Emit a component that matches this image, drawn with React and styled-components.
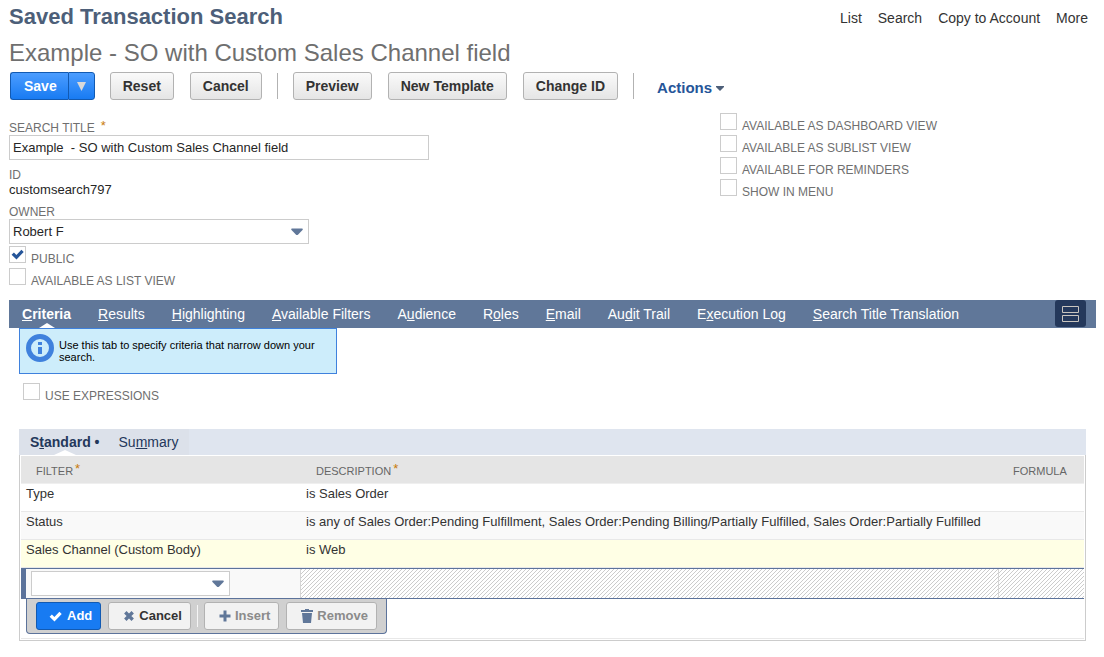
import React, { useState } from "react";
import styled, { createGlobalStyle, css } from "styled-components";

const GlobalStyle = createGlobalStyle`
  *, *::before, *::after { box-sizing: border-box; }
  body {
    margin: 0;
    background: #fff;
    color: #262626;
    font: 13px/16px "Liberation Sans", Arial, sans-serif;
  }
  button, input, select { font: inherit; }
`;

const Page = styled.main`
  padding: 4px 8px 16px 9px;
`;

const Header = styled.header`
  display: flex;
  justify-content: space-between;
  align-items: flex-start;
`;

const Title = styled.h1`
  margin: 0;
  font-size: 22px;
  line-height: 26px;
  color: #4d5f79;
`;

const Subtitle = styled.h2`
  margin: 9px 0 6px;
  font-size: 24px;
  line-height: 27px;
  font-weight: normal;
  color: #6f6f6f;
`;

const PageLinks = styled.nav`
  display: flex;
  gap: 16px;
  padding: 6px 8px 0 0;
`;

const PageLink = styled.a`
  font-size: 14px;
  color: #333;
  text-decoration: none;
`;

const Toolbar = styled.div`
  display: flex;
  align-items: center;
  padding-left: 1px;
  gap: 15px;

  > button + button { margin-left: 1px; }
`;

const primary = css`
  color: #fff;
  border-color: #125ab2;
  background: linear-gradient(#4c9dff, #187bf2);
`;

const Button = styled.button`
  height: 28px;
  padding: 0 12px;
  border: 1px solid #b2b2b2;
  border-radius: 3px;
  background: linear-gradient(#fafafa, #e5e5e5);
  color: #333;
  font-size: 14px;
  font-weight: bold;
  white-space: nowrap;
  ${(p) => p.$primary && primary}
`;

const SplitButton = styled.div`
  display: flex;
`;

const SaveButton = styled(Button)`
  padding: 0 11px 0 13px;
  border-radius: 3px 0 0 3px;
  border-right-width: 0;
`;

const SaveMenuButton = styled(Button)`
  display: flex;
  align-items: center;
  justify-content: center;
  width: 27px;
  padding: 0;
  border-radius: 0 3px 3px 0;
`;

const Divider = styled.span`
  width: 1px;
  height: 26px;
  background: #b2b2b2;
`;

const ActionsButton = styled.button`
  display: flex;
  align-items: center;
  gap: 4px;
  margin: 4px 0 0 8px;
  padding: 0;
  border: 0;
  background: none;
  color: #255599;
  font-size: 15px;
  font-weight: bold;
`;

const FormArea = styled.form`
  display: grid;
  grid-template-columns: 711px 1fr;
  padding-top: 13px;
`;

const FormColumn = styled.div`
  display: flex;
  flex-direction: column;
`;

const Field = styled.div`
  display: flex;
  flex-direction: column;
  align-items: flex-start;
  margin-bottom: ${(p) => (p.$tight ? 2 : 8)}px;
`;

const FieldLabel = styled.label`
  padding-top: ${(p) => (p.$first ? 8 : 0)}px;
  font-size: 12px;
  line-height: 14px;
  color: #6f6f6f;
`;

const FieldValue = styled.span`
  line-height: 15px;
`;

const Required = styled.span`
  color: #c87b0a;
  font-size: 13px;
  line-height: 10px;
  margin-left: ${(p) => (p.$wide ? 6 : 2)}px;
  vertical-align: 2px;
`;

const TextInput = styled.input`
  width: 420px;
  height: 25px;
  padding: 0 3px;
  border: 1px solid #ccc;
  color: #262626;
`;

const SelectBox = styled.div`
  display: grid;
  align-items: center;
  width: ${(p) => p.$width}px;
  background: #fff;

  > * { grid-area: 1 / 1; }
  > svg {
    justify-self: end;
    margin-right: 6px;
    pointer-events: none;
  }
`;

const Select = styled.select`
  appearance: none;
  width: 100%;
  height: 25px;
  padding: 0 24px 0 3px;
  border: 1px solid #ccc;
  border-radius: 0;
  background: transparent;
  color: #262626;
`;

const CheckLabel = styled.label`
  display: flex;
  align-items: flex-start;
  gap: 5px;
  height: 22px;
  font-size: 12px;
  line-height: 15px;
  color: #6f6f6f;

  > span:last-child { padding-top: 6px; }
`;

const CheckFrame = styled.span`
  display: grid;
  flex: none;
  width: 17px;
  height: 17px;
  border: 1px solid #ccc;
  background: #fff;

  > * { grid-area: 1 / 1; }
  > svg { display: none; pointer-events: none; }
  > input:checked + svg { display: block; }
`;

const CheckInput = styled.input`
  appearance: none;
  width: 15px;
  height: 15px;
  margin: 0;
`;

const TabBar = styled.nav`
  display: flex;
  justify-content: space-between;
  height: 28px;
  padding: 0 10px 0 0;
  margin-top: 10px;
  background: #607799;
`;

const Tabs = styled.div`
  display: flex;
`;

const Tab = styled.button`
  display: flex;
  flex-direction: column;
  align-items: center;
  justify-content: space-between;
  padding: 6px 14px 0 13px;
  border: 0;
  background: none;
  color: #fff;
  font-size: 14px;
  font-weight: ${(p) => (p.$active ? "bold" : "normal")};
  white-space: nowrap;
`;

const LayoutButton = styled.button`
  display: grid;
  place-items: center;
  width: 31px;
  height: 27px;
  padding: 0;
  border: 0;
  border-radius: 3px;
  background: #24385b;
`;

const Panel = styled.section`
  padding: 0 10px;
`;

const Hint = styled.div`
  display: flex;
  gap: 5px;
  width: 318px;
  height: 46px;
  padding: 5px 6px;
  border: 1px solid #3f81dd;
  background: #cdedfb;
  color: #000;
  font-size: 11px;
  line-height: 12px;

  > svg { flex: none; }
  > p { margin: 5px 0 0; }
`;

const ExpressionRow = styled.div`
  padding: 9px 0 24px 4px;
`;

const SubTabBar = styled.div`
  display: flex;
  height: 26px;
  background: #dfe5ef;
`;

const SubTabs = styled.div`
  display: flex;
  background: #dce1ea;
`;

const SubTab = styled(Tab)`
  padding: 5px ${(p) => (p.$active ? 10 : 11)}px 0 ${(p) => (p.$active ? 11 : 9)}px;
  color: #24385b;
`;

const Machine = styled.div`
  padding: 1px;
  border: 1px solid #ccc;
  border-top: 0;
`;

const Table = styled.table`
  width: 100%;
  border-collapse: separate;
  border-spacing: 0;
  table-layout: fixed;
  color: #333;
`;

const HeadCell = styled.th`
  width: ${(p) => p.$width};
  height: 28px;
  padding: 2px 15px 0;
  border-bottom: 1px solid #efefef;
  background: #e5e5e5;
  color: #666;
  font-size: 11px;
  font-weight: normal;
  text-align: left;
  white-space: nowrap;
`;

const Row = styled.tr`
  background: ${(p) => p.$fill};
`;

const Cell = styled.td`
  height: 28px;
  padding: 2px 5px 0;
  border-bottom: 1px solid #e8e8e8;
  vertical-align: top;
  white-space: nowrap;
`;

const EditCell = styled.td`
  height: 31px;
  padding: 0 5px;
  border: solid #5c739b;
  border-width: 1px 0 1px 5px;
  box-shadow: inset -1px 0 #d5d5d5;
  background: #f9f9f9;
`;

const HatchCell = styled.td`
  padding: 0;
  border: solid #5c739b;
  border-width: 1px 0;
  background: linear-gradient(
      135deg,
      #ccc 12.5%,
      #fff 12.5% 50%,
      #ccc 50% 62.5%,
      #fff 62.5%
    )
    0 0 / 4px 4px;

  & + & { box-shadow: inset 1px 0 #d5d5d5; }
`;

const RowActions = styled.div`
  display: inline-flex;
  align-items: flex-start;
  gap: 7px;
  height: 35px;
  margin-left: 5px;
  padding: 3px 9px;
  border: 1px solid #5c739b;
  border-top: 0;
  border-radius: 0 0 4px 4px;
  background: #d0d0d0;
`;

const MachineFoot = styled.div`
  display: flex;
  height: 40px;
  border-bottom: 1px solid #e8e8e8;
`;

const RowButton = styled(Button)`
  display: flex;
  align-items: center;
  gap: 4px;
  padding: 0 8px 0 ${(p) => p.$left}px;
  background: ${(p) => (p.$primary ? "#187bf2" : "#f2f2f2")};
  color: ${(p) => (p.$primary ? "#fff" : p.$muted ? "#8b8b8b" : "#333")};
  font-size: 13px;
`;

const RowDivider = styled.span`
  width: 1px;
  height: 22px;
  margin: 3px -1px 0;
  background: #f5f5f5;
`;

const CaretIcon = () => (
  <svg width="12" height="8" viewBox="0 0 12 8" aria-hidden="true">
    <path d="M1 0.5H11Q12.4 1 11.5 2L7.2 6.5Q6 7.6 4.8 6.5L0.5 2Q-0.4 1 1 0.5Z" fill="#607799" />
  </svg>
);

const CheckIcon = ({ size, color }) => (
  <svg width={size} height={size} viewBox="0 0 15 15" aria-hidden="true">
    <path d="M1.6 7.8L3.9 5.5l2.5 2.5L11.4 2.8l2.3 2.2-7.2 7.4z" fill={color} />
  </svg>
);

const CrossIcon = () => (
  <svg width="12" height="12" viewBox="0 0 12 12" aria-hidden="true">
    <path d="M2.3 2.3l7.4 7.4M9.7 2.3L2.3 9.7" stroke="#607799" strokeWidth="3.4" />
  </svg>
);

const PlusIcon = () => (
  <svg width="12" height="12" viewBox="0 0 12 12" aria-hidden="true">
    <path d="M6 0.5v11M0.5 6h11" stroke="#607799" strokeWidth="3" />
  </svg>
);

const TrashIcon = () => (
  <svg width="12" height="14" viewBox="0 0 12 14" aria-hidden="true">
    <path d="M0 1h4V0h4v1h4v2H0zM1 4h10l-1 10H2z" fill="#607799" />
  </svg>
);

const InfoIcon = () => (
  <svg width="28" height="28" viewBox="0 0 28 28" aria-hidden="true">
    <circle cx="14" cy="14" r="11.5" fill="none" stroke="#3f81dd" strokeWidth="5" />
    <path d="M12 8h4v3h-4zM12 13h4v7h-4z" fill="#3f81dd" />
  </svg>
);

const NotchIcon = ({ width = 16 }) => (
  <svg width={width} height="5" viewBox="0 0 16 5" preserveAspectRatio="none" aria-hidden="true">
    <path d="M0 5L8 0l8 5z" fill="#fff" />
  </svg>
);

function CheckField({ label, defaultChecked }) {
  return (
    <CheckLabel>
      <CheckFrame>
        <CheckInput type="checkbox" defaultChecked={defaultChecked} />
        <CheckIcon size={15} color="#255599" />
      </CheckFrame>
      <span>{label}</span>
    </CheckLabel>
  );
}

function AccessText({ text, at = 0 }) {
  return (
    <span>
      {text.slice(0, at)}
      <u>{text[at]}</u>
      {text.slice(at + 1)}
    </span>
  );
}

const tabs = [
  ["Criteria", 0],
  ["Results", 0],
  ["Highlighting", 0],
  ["Available Filters", 0],
  ["Audience", 1],
  ["Roles", 1],
  ["Email", 0],
  ["Audit Trail", 2],
  ["Execution Log", 1],
  ["Search Title Translation", 0],
];

const filters = [
  ["Type", "is Sales Order", "#fff"],
  [
    "Status",
    "is any of Sales Order:Pending Fulfillment, Sales Order:Pending Billing/Partially Fulfilled, Sales Order:Partially Fulfilled",
    "#f9f9f9",
  ],
  ["Sales Channel (Custom Body)", "is Web", "#ffffe5"],
];

export default function App() {
  const [active, setActive] = useState("Criteria");

  return (
    <>
      <GlobalStyle />
      <Page>
        <Header>
          <Title>Saved Transaction Search</Title>
          <PageLinks>
            {["List", "Search", "Copy to Account", "More"].map((t) => (
              <PageLink key={t} href="#">{t}</PageLink>
            ))}
          </PageLinks>
        </Header>
        <Subtitle>Example - SO with Custom Sales Channel field</Subtitle>

        <Toolbar>
          <SplitButton>
            <SaveButton $primary>Save</SaveButton>
            <SaveMenuButton $primary aria-label="More save options">
              <svg width="9" height="9" viewBox="0 0 9 9" aria-hidden="true">
                <path d="M0 0h9L4.5 9z" fill="#d9d9d9" />
              </svg>
            </SaveMenuButton>
          </SplitButton>
          <Button>Reset</Button>
          <Button>Cancel</Button>
          <Divider />
          <Button>Preview</Button>
          <Button>New Template</Button>
          <Button>Change ID</Button>
          <Divider />
          <ActionsButton>
            Actions
            <svg width="8" height="5" viewBox="0 0 8 5" aria-hidden="true">
              <path d="M0 0h8v1L4 5 0 1z" fill="#4d5f79" />
            </svg>
          </ActionsButton>
        </Toolbar>

        <FormArea>
          <FormColumn>
            <Field>
              <FieldLabel $first htmlFor="title">
                SEARCH TITLE<Required $wide>*</Required>
              </FieldLabel>
              <TextInput id="title" defaultValue="Example  - SO with Custom Sales Channel field" />
            </Field>
            <Field>
              <FieldLabel as="span">ID</FieldLabel>
              <FieldValue>customsearch797</FieldValue>
            </Field>
            <Field $tight>
              <FieldLabel htmlFor="owner">OWNER</FieldLabel>
              <SelectBox $width={300}>
                <Select id="owner">
                  <option>Robert F</option>
                </Select>
                <CaretIcon />
              </SelectBox>
            </Field>
            <CheckField label="PUBLIC" defaultChecked />
            <CheckField label="AVAILABLE AS LIST VIEW" />
          </FormColumn>
          <FormColumn>
            <CheckField label="AVAILABLE AS DASHBOARD VIEW" />
            <CheckField label="AVAILABLE AS SUBLIST VIEW" />
            <CheckField label="AVAILABLE FOR REMINDERS" />
            <CheckField label="SHOW IN MENU" />
          </FormColumn>
        </FormArea>

        <TabBar>
          <Tabs>
            {tabs.map(([text, at]) => (
              <Tab key={text} $active={text === active} onClick={() => setActive(text)}>
                <AccessText text={text} at={at} />
                {text === active && <NotchIcon />}
              </Tab>
            ))}
          </Tabs>
          <LayoutButton aria-label="Change layout">
            <svg width="17" height="16" viewBox="0 0 17 16" aria-hidden="true">
              <path d="M0.5 0.5h16v6h-16zM0.5 9.5h16v6h-16z" fill="none" stroke="#c9c5bf" />
            </svg>
          </LayoutButton>
        </TabBar>

        <Panel>
          <Hint>
            <InfoIcon />
            <p>Use this tab to specify criteria that narrow down your search.</p>
          </Hint>
          <ExpressionRow>
            <CheckField label="USE EXPRESSIONS" />
          </ExpressionRow>

          <SubTabBar>
            <SubTabs>
              <SubTab $active>
                <span>
                  <AccessText text="Standard" at={1} /> •
                </span>
                <NotchIcon width={22} />
              </SubTab>
              <SubTab>
                <AccessText text="Summary" at={2} />
              </SubTab>
            </SubTabs>
          </SubTabBar>
          <Machine>
            <Table>
              <thead>
                <tr>
                  <HeadCell $width="280px">FILTER<Required>*</Required></HeadCell>
                  <HeadCell $width="auto">DESCRIPTION<Required>*</Required></HeadCell>
                  <HeadCell $width="86px">FORMULA</HeadCell>
                </tr>
              </thead>
              <tbody>
                {filters.map(([name, description, fill]) => (
                  <Row key={name} $fill={fill}>
                    <Cell>{name}</Cell>
                    <Cell>{description}</Cell>
                    <Cell />
                  </Row>
                ))}
                <tr>
                  <EditCell>
                    <SelectBox $width={199}>
                      <Select aria-label="Filter" />
                      <CaretIcon />
                    </SelectBox>
                  </EditCell>
                  <HatchCell />
                  <HatchCell />
                </tr>
              </tbody>
            </Table>
            <MachineFoot>
              <RowActions>
                <RowButton $primary $left={11}>
                  <CheckIcon size={15} color="#fff" />
                  Add
                </RowButton>
                <RowButton $left={14}>
                  <CrossIcon />
                  Cancel
                </RowButton>
                <RowDivider />
                <RowButton $muted $left={14}>
                  <PlusIcon />
                  Insert
                </RowButton>
                <RowButton $muted $left={14}>
                  <TrashIcon />
                  Remove
                </RowButton>
              </RowActions>
            </MachineFoot>
          </Machine>
        </Panel>
      </Page>
    </>
  );
}
